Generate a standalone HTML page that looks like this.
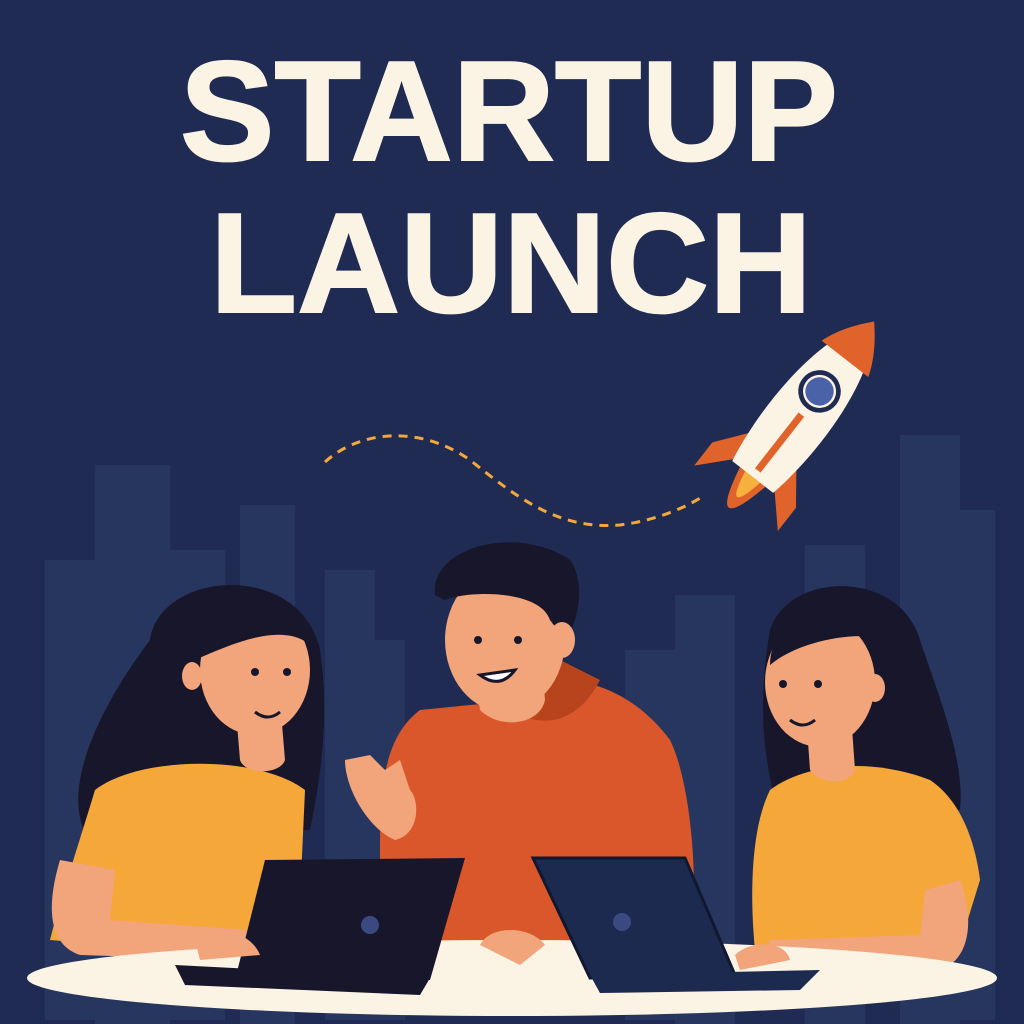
<!DOCTYPE html>
<html><head><meta charset="utf-8"><style>
html,body{margin:0;padding:0;background:#1f2b52;}
svg{display:block}
</style></head><body>
<svg width="1024" height="1024" viewBox="0 0 1024 1024" xmlns="http://www.w3.org/2000/svg">
<rect width="1024" height="1024" fill="#1f2b52"/>
<g fill="#27365f">
<rect x="45" y="560" width="55" height="460"/>
<rect x="95" y="465" width="75" height="560"/>
<rect x="165" y="550" width="60" height="470"/>
<rect x="240" y="505" width="55" height="520"/>
<rect x="325" y="570" width="50" height="450"/>
<rect x="370" y="640" width="35" height="380"/>
<rect x="625" y="650" width="50" height="370"/>
<rect x="675" y="595" width="60" height="430"/>
<rect x="805" y="545" width="60" height="480"/>
<rect x="900" y="435" width="60" height="590"/>
<rect x="955" y="510" width="40" height="510"/>
</g>
<text x="180" y="160" font-family="Liberation Sans, sans-serif" font-weight="bold" font-size="142" fill="#fbf3e4" textLength="658" lengthAdjust="spacingAndGlyphs" stroke="#fbf3e4" stroke-width="2">STARTUP</text>
<text x="210" y="312" font-family="Liberation Sans, sans-serif" font-weight="bold" font-size="142" fill="#fbf3e4" textLength="602" lengthAdjust="spacingAndGlyphs" stroke="#fbf3e4" stroke-width="2">LAUNCH</text>
<path d="M325 462 C360 430,420 425,470 460 C520 500,560 530,620 525 C660 520,690 505,705 495" fill="none" stroke="#f2a83a" stroke-width="3" stroke-dasharray="9 7"/>
<g transform="translate(805,410) rotate(38) scale(1.18)">
<path d="M-22 40 L-45 70 L-45 95 L-22 70Z" fill="#e0632c"/>
<path d="M22 40 L45 70 L45 95 L22 70Z" fill="#e0632c"/>
<path d="M-14 70 Q0 140 14 70Z" fill="#e0632c"/>
<path d="M-8 72 Q0 115 8 72Z" fill="#f5b13c"/>
<path d="M0 -95 C30 -60,32 20,22 72 L-22 72 C-32 20,-30 -60,0 -95Z" fill="#fbf3e4"/>
<path d="M0 -95 C14 -80,22 -65,25 -55 L-25 -55 C-22 -65,-14 -80,0 -95Z" fill="#e0632c"/>
<circle cx="0" cy="-20" r="16" fill="#fbf3e4" stroke="#1f2b52" stroke-width="4"/>
<circle cx="0" cy="-20" r="12" fill="#4a62a8"/>
<rect x="-3" y="5" width="6" height="60" fill="#e0632c"/>
</g>
<!-- left woman -->
<path d="M150 640 C160 570,300 560,320 650 C330 720,320 780,310 830 L90 840 C60 800,90 720,150 640Z" fill="#17162a"/>
<path d="M95 790 C80 840,60 900,50 940 L230 955 L300 900 L305 790 C260 755,140 755,95 790Z" fill="#f5a73a"/>
<path d="M60 860 C45 910,50 945,80 955 L240 960 L250 930 L110 920 L115 870Z" fill="#f2a47a"/>
<path d="M235 700 L240 760 C245 775,280 775,285 760 L280 700Z" fill="#f2a47a"/>
<ellipse cx="255" cy="670" rx="55" ry="65" fill="#f2a47a"/>
<path d="M195 640 C210 590,300 590,315 650 C290 620,240 640,195 660Z" fill="#17162a"/>
<ellipse cx="192" cy="676" rx="10" ry="14" fill="#f2a47a"/>
<circle cx="255" cy="672" r="4" fill="#17162a"/><circle cx="287" cy="672" r="4" fill="#17162a"/>
<path d="M255 712 Q268 722,280 712" stroke="#17162a" stroke-width="3" fill="none"/>
<!-- man -->
<path d="M420 710 C380 740,380 800,380 860 L420 945 L690 945 C700 880,690 780,670 740 C640 700,600 680,560 680 L520 700Z" fill="#d9572a"/>
<path d="M490 695 C480 660,500 640,520 640 L600 680 C580 720,540 740,490 695Z" fill="#b8441e"/>
<path d="M470 640 L480 710 C500 730,540 725,545 700 L540 640Z" fill="#f2a47a"/>
<ellipse cx="505" cy="640" rx="60" ry="72" fill="#f2a47a"/>
<path d="M435 595 C430 545,520 525,570 560 C585 580,580 620,565 640 L550 620 C540 590,470 590,445 600Z" fill="#17162a"/>
<ellipse cx="562" cy="640" rx="13" ry="18" fill="#f2a47a"/>
<circle cx="478" cy="640" r="4" fill="#17162a"/><circle cx="518" cy="640" r="4" fill="#17162a"/>
<path d="M480 675 Q500 690,515 670 Z" fill="#fff" stroke="#17162a" stroke-width="3"/>
<path d="M345 760 C345 790,370 830,395 840 C420 835,420 800,410 790 L400 760 L385 770 L370 755Z" fill="#f2a47a"/>
<!-- right woman -->
<path d="M770 630 C790 570,900 570,920 640 C940 700,965 760,960 810 L775 800 C760 740,760 690,770 630Z" fill="#17162a"/>
<path d="M770 790 C750 830,750 900,755 950 L960 945 L980 880 C975 840,960 800,930 780 C880 760,810 760,770 790Z" fill="#f5a73a"/>
<path d="M960 880 C975 920,970 960,940 970 L760 970 L770 940 L920 935 L925 890Z" fill="#f2a47a"/>
<path d="M805 700 L810 770 C820 785,850 785,855 770 L850 700Z" fill="#f2a47a"/>
<ellipse cx="820" cy="682" rx="55" ry="65" fill="#f2a47a"/>
<path d="M770 665 C770 610,850 590,885 640 C860 630,800 640,770 665Z" fill="#17162a"/>
<ellipse cx="875" cy="688" rx="10" ry="14" fill="#f2a47a"/>
<circle cx="783" cy="684" r="4" fill="#17162a"/><circle cx="818" cy="684" r="4" fill="#17162a"/>
<path d="M790 720 Q803 730,815 720" stroke="#17162a" stroke-width="3" fill="none"/>
<ellipse cx="512" cy="978" rx="485" ry="38" fill="#fbf3e4"/>
<path d="M265 860 L465 858 L430 980 L235 980Z" fill="#17162a"/>
<path d="M175 965 L430 978 L420 995 L185 985Z" fill="#17162a"/>
<circle cx="370" cy="925" r="9" fill="#3a4a80"/>
<path d="M533 858 L685 858 L735 975 L590 978Z" fill="#1c2a50" stroke="#101830" stroke-width="3"/>
<path d="M590 975 L820 970 L800 990 L600 993Z" fill="#1c2a50"/>
<circle cx="622" cy="922" r="9" fill="#3a4a80"/>
<path d="M480 945 C490 925,530 925,545 945 L520 965 Z" fill="#f2a47a"/>
<path d="M195 940 C215 925,250 930,260 955 L200 960Z" fill="#f2a47a"/>
<path d="M735 955 C750 940,785 940,790 960 L740 970Z" fill="#f2a47a"/>
</svg>
</body></html>
